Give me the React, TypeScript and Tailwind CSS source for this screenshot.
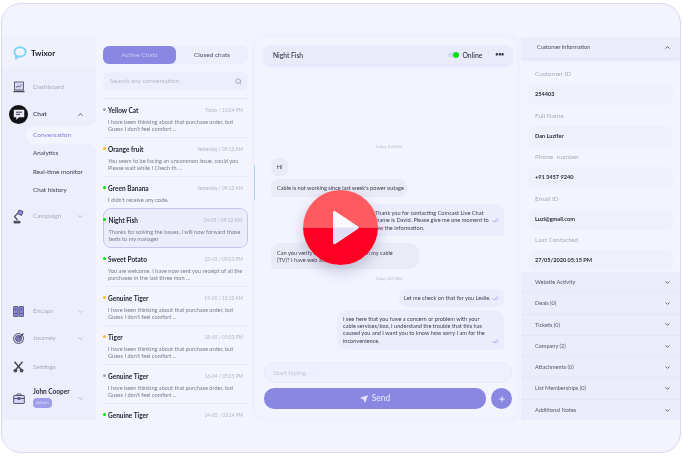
import React from 'react';
import { ChevronDown, ChevronUp, Search, Send, Plus, CheckCheck } from 'lucide-react';

const chats = [
  { name: 'Yellow Cat', time: 'Today / 10:24 PM', dot: 'bg-[#a9a9b8]', lines: ['I have been thinking about that purchase order, but', "Guess I don't feel comfort ..."] },
  { name: 'Orange fruit', time: 'Yesterday / 09:13 AM', dot: 'bg-[#fdb92e]', lines: ['You seem to be facing an uncommon issue, could you', 'Please wait while I Chech th ...'] },
  { name: 'Green Banana', time: 'Yesterday / 09:13 AM', dot: 'bg-[#0ade16]', lines: ["I didn't receive any code."] },
  { name: 'Night Fish', time: '24-05 / 09:13 AM', dot: 'bg-[#0ade16]', active: true, lines: ['Thanks for solving the issues. I will now forward those', 'texts to my manager'] },
  { name: 'Sweet Potato', time: '23-05 / 09:23 PM', dot: 'bg-[#0ade16]', lines: ['You are welcome. I have now sent you receipt of all the', 'purchases in the last three mon ...'] },
  { name: 'Genuine Tiger', time: '19-05 / 12:13 AM', dot: 'bg-[#fdb92e]', lines: ['I have been thinking about that purchase order, but', "Guess I don't feel comfort ..."] },
  { name: 'Tiger', time: '18-05 / 05:33 PM', dot: 'bg-[#fdb92e]', lines: ['I have been thinking about that purchase order, but', "Guess I don't feel comfort ..."] },
  { name: 'Genuine Tiger', time: '16-04 / 05:25 PM', dot: 'bg-[#a9a9b8]', lines: ['I have been thinking about that purchase order, but', "Guess I don't feel comfort ..."] },
  { name: 'Genuine Tiger', time: '14-05 / 03:14 PM', dot: 'bg-[#0ade16]', lines: [] },
];

const fields = [
  { label: 'Customer ID', value: '254403' },
  { label: 'Full Name', value: 'Dan Luzifer' },
  { label: 'Phone  number', value: '+91 3457 9240' },
  { label: 'Email ID', value: 'Luzi@gmail.com' },
  { label: 'Last Contacted', value: '27/05/2020 05:15 PM' },
];

const sections = ['Website Activity', 'Deals (0)', 'Tickets (0)', 'Company (2)', 'Attachments (0)', 'List Memberships (0)', 'Additional Notes'];

const LogoIcon = () => (
  <svg width="14" height="14" viewBox="0 0 14 14" fill="none">
    <path d="M7 1.2c3 0 5.6 1.9 5.6 4.7S10 10.5 7 10.5c-.6 0-1.2 0-1.7-.2L3 12.6l.1-3.2C2 8.500 1.400 7.300 1.400 5.900 1.400 3.100 4 1.200 7 1.200Z" fill="#eef3fd" stroke="#7fd3f7" strokeWidth="2" strokeLinejoin="round" />
  </svg>
);

const MonitorIcon = () => (
  <svg width="12" height="12" viewBox="0 0 12 12" fill="none" stroke="#4a4a60" strokeWidth="0.8">
    <rect x="1.500" y="1" width="9" height="8" fill="#d5d7f5" />
    <path d="M3 6.500 5 5l1.500 1L9 3.500" />
    <path d="M.5 10.500h11" strokeWidth="1.300" />
  </svg>
);

const ChatIcon = () => (
  <svg width="12" height="11" viewBox="0 0 12 11" fill="none">
    <path d="M1 1h10v7H6L3.500 10.300V8H1Z" fill="#e9e9f6" stroke="#e9e9f6" strokeWidth="0.500" />
    <path d="M3 3.200h6M3 5.400h4" stroke="#15151c" strokeWidth="0.800" />
  </svg>
);

const LampIcon = () => (
  <svg width="11" height="15" viewBox="0 0 11 15" fill="none" stroke="#4a4a60" strokeWidth="0.900">
    <path d="M6 1 10 2.500 8.500 6.500 4.500 4.500Z" fill="#8a87e2" />
    <path d="M4.500 4.500 1.500 7.500l3 3.500" strokeWidth="1.200" />
    <path d="M1 14h6v-1.800H1Z" fill="#4a4a60" />
  </svg>
);

const BinderIcon = () => (
  <svg width="11" height="11" viewBox="0 0 11 11" fill="#8a87e2" stroke="#4a4a60" strokeWidth="0.800">
    <rect x="0.500" y="0.500" width="4.500" height="10" rx="0.500" />
    <rect x="6" y="0.500" width="4.500" height="10" rx="0.500" />
    <path d="M2.700 2v3M8.200 2v3M1.500 7.500h2.500M7 7.500h2.500" fill="none" />
  </svg>
);

const TargetIcon = () => (
  <svg width="12" height="12" viewBox="0 0 12 12" fill="none" stroke="#4a4a60" strokeWidth="0.900">
    <circle cx="5.500" cy="6.500" r="5" fill="#d5d4f6" />
    <circle cx="5.500" cy="6.500" r="3" fill="#8a87e2" />
    <circle cx="5.500" cy="6.500" r="1.200" fill="#f3f4fe" />
    <path d="M5.500 6.500 10.500 1.500" strokeWidth="1.100" />
  </svg>
);

const ToolsIcon = () => (
  <svg width="11" height="12" viewBox="0 0 11 12" fill="none" stroke="#4a4a60">
    <path d="M1.500.8 8.500 9M9.500.8 2.500 9" strokeWidth="1.500" />
    <circle cx="2.400" cy="9.600" r="1.900" fill="#4a4a60" stroke="none" />
    <circle cx="8.600" cy="9.600" r="1.900" fill="#4a4a60" stroke="none" />
  </svg>
);

const CaseIcon = () => (
  <svg width="12" height="11" viewBox="0 0 12 11" fill="#d5d4f6" stroke="#4a4a60" strokeWidth="0.900">
    <rect x="0.700" y="2.500" width="10.600" height="8" rx="0.500" />
    <path d="M4 2.500V1h4v1.500M.7 5.500h10.600" fill="none" />
    <rect x="5" y="4.700" width="2" height="1.600" fill="#8a87e2" />
  </svg>
);

const NavItem = ({ icon, label, chevron, className }: { icon: React.ReactNode; label: string; chevron?: boolean; className: string }) => (
  <div className={`flex items-center h-[14px] ${className}`}>
    <div className="w-[31px] pl-[11px] flex justify-start">{icon}</div>
    <span className="text-[6.500px] text-[#a9abc0] w-[44px]">{label}</span>
    {chevron && <ChevronDown size={7} className="text-[#9a9bb0]" strokeWidth={2} />}
  </div>
);

const Sidebar = () => (
  <aside className="w-[94px] h-full bg-[#eceefc] flex flex-col shrink-0 relative">
    <div className="h-[31px] bg-[#eff1fd] flex items-center pl-[11px] gap-[4px]">
      <LogoIcon />
      <span className="text-[8px] font-bold text-[#23232f]">Twixor</span>
    </div>
    <NavItem className="mt-[12px]" icon={<MonitorIcon />} label="Dashboard" />
    <div className="flex items-center h-[20px] mt-[10px] relative">
      <div className="ml-[7px] w-[19px] h-[19px] rounded-full bg-[#111116] flex items-center justify-center"><ChatIcon /></div>
      <span className="ml-[5px] text-[6.500px] font-medium text-[#2d2d3b] w-[44px]">Chat</span>
      <ChevronUp size={7} className="text-[#30303f]" strokeWidth={2.500} />
    </div>
    <div className="relative ml-[24px] mt-[2px] h-[18px] bg-[#f3f4fe] rounded-l-[9px] flex items-center pl-[7px]">
      <span className="text-[6.500px] font-medium text-[#8a87e2]">Conversation</span>
      <div className="absolute right-0 -top-[8px] w-[8px] h-[8px] bg-[#f3f4fe]"><div className="w-full h-full bg-[#eceefc] rounded-br-[8px]" /></div>
      <div className="absolute right-0 -bottom-[8px] w-[8px] h-[8px] bg-[#f3f4fe]"><div className="w-full h-full bg-[#eceefc] rounded-tr-[8px]" /></div>
    </div>
    <div className="ml-[31px] mt-[5px] flex flex-col gap-[10.500px] text-[6.300px] text-[#3c3c4c] leading-[8px]">
      <span>Analytics</span>
      <span>Real-time monitor</span>
      <span>Chat history</span>
    </div>
    <NavItem className="mt-[15px]" icon={<LampIcon />} label="Campaign" chevron />
    <NavItem className="mt-[81px]" icon={<BinderIcon />} label="Encaps" chevron />
    <NavItem className="mt-[13px]" icon={<TargetIcon />} label="Journey" chevron />
    <NavItem className="mt-[15px]" icon={<ToolsIcon />} label="Settings" />
    <div className="flex mt-[12px] h-[24px] items-center">
      <div className="w-[31px] pl-[11px]"><CaseIcon /></div>
      <div className="w-[44px] flex flex-col items-start gap-[2px]">
        <span className="text-[6.500px] font-bold text-[#2d2d3b] leading-[8px] whitespace-nowrap">John Cooper</span>
        <span className="bg-[#a09deb] text-[#d9d8f8] text-[4.500px] rounded-[4px] px-[3px] h-[10px] flex items-center">Admin</span>
      </div>
      <ChevronDown size={7} className="text-[#9a9bb0]" strokeWidth={2} />
    </div>
  </aside>
);

const ChatList = () => (
  <section className="w-[159px] h-full shrink-0 pt-[9px] px-[7px] overflow-hidden relative">
    <div className="w-[145px] h-[18px] bg-[#eceefb] rounded-[6px] flex text-[6.500px]">
      <div className="w-[73px] h-full bg-[#8a87e2] rounded-[6px] flex items-center justify-center text-[#c9c8f3]">Active Chats</div>
      <div className="flex-1 flex items-center justify-center text-[#50505f]">Closed chats</div>
    </div>
    <div className="w-[145px] h-[18px] mt-[8px] bg-[#eceefb] rounded-[6px] flex items-center justify-between pl-[7px] pr-[6px] text-[6.500px] text-[#b5b7cc]">
      <span>Search any conversation</span>
      <Search size={7} className="text-[#80828f]" />
    </div>
    <div className="w-[145px] mt-[8px] border-t border-[#e5e6f6]">
      {chats.map((chat, i) => (
        <div
          key={i}
          className={
            chat.active
              ? 'relative h-[40px] -mt-[1px] pt-[7px] pl-[4.500px] pr-[5px] rounded-[8px] border border-[#c5c6f0] bg-[#ecedfb]'
              : `relative pt-[7px] pl-[5px] pr-[5px] ${chat.lines.length === 2 ? 'h-[39px] border-b border-[#e9eaf8]' : 'h-[32px]'}`
          }
        >
          <span className={`absolute left-0 top-[9px] w-[3px] h-[3px] rounded-full ${chat.dot} ${chat.active ? '-translate-x-[1px]' : ''}`} />
          <div className="flex items-center justify-between h-[9px]">
            <span className="text-[6.500px] font-bold text-[#262633]">{chat.name}</span>
            <span className="text-[4.800px] text-[#b3b5c4]">{chat.time}</span>
          </div>
          <div className="mt-[2.500px] text-[5.600px] leading-[7px] text-[#7c7c8c] whitespace-nowrap">
            {chat.lines.map((l) => <div key={l}>{l}</div>)}
          </div>
        </div>
      ))}
    </div>
    <div className="absolute right-[-1px] top-[128px] w-[2px] h-[35px] bg-[#9fdcf8]" />
  </section>
);

const Ticks = () => <CheckCheck size={7} className="text-[#a9a6ee] shrink-0" strokeWidth={3} />;

const Message = ({ lines, me, className }: { lines: string[]; me?: boolean; className: string }) => (
  <div className={`flex text-[5.600px] leading-[7.200px] text-[#3e3e4e] whitespace-nowrap ${className}`}>
    <div className="flex-1">{lines.map((l) => <div key={l}>{l}</div>)}</div>
    {me && <div className="self-end ml-[3px]"><Ticks /></div>}
  </div>
);

const ChatPanel = () => (
  <section className="w-[262px] h-[381px] shrink-0 bg-[#f3f4fe] rounded-[10px] shadow-[0_0_6px_rgba(200,202,240,0.25)] relative pt-[9px] px-[9px] flex flex-col">
    <div className="w-[248px] h-[18px] bg-[#e9ebfb] rounded-[6px] shadow-[0_2px_4px_rgba(200,202,240,0.4)] flex items-center pl-[9px] pr-[7px] shrink-0">
      <span className="text-[6.700px] font-medium text-[#30303f] flex-1">Night Fish</span>
      <span className="relative w-[11px] h-[4px] rounded-full bg-[#d5d7f3] mr-[3px]">
        <span className="absolute right-0 top-[-1px] w-[6px] h-[6px] rounded-full bg-[#0ade16]" />
      </span>
      <span className="text-[6.800px] font-medium text-[#30303f]">Online</span>
      <span className="w-px h-[8px] bg-[#e1e3f7] mx-[6px]" />
      <span className="text-[5.500px] font-bold text-[#30303f] leading-none tracking-[-0.300px] pr-[1px]">•••</span>
    </div>
    <div className="text-center text-[4.200px] text-[#bcbdcc] mt-[80px] h-[5px] leading-[5px] pl-[6px]">Today 8:24AM</div>
    <div className="mt-[9px] pl-[7px] flex flex-col items-start">
      <div className="h-[18px] w-[17px] rounded-[7px] bg-[#eaebf6] flex items-center justify-center text-[5.600px] text-[#3e3e4e]">Hi</div>
      <Message className="mt-[3px] h-[18px] w-[136px] rounded-[8px] rounded-bl-[2px] bg-[#eaebf6] px-[6px] items-center" lines={["Cable is not working since last week's power outage"]} />
    </div>
    <div className="self-end mr-[4px] mt-[7px] h-[32px] w-[150px] rounded-[8px] rounded-br-[2px] bg-[#ecedfc] pl-[13px] pr-[5.500px] flex items-center text-[5.600px] leading-[7.200px] text-[#3e3e4e] whitespace-nowrap">
      <div className="flex-1">
        <div>Hi, Thank you for contacting Comcast Live Chat</div>
        <div>My name is David. Please give me one moment to</div>
        <div>review the information.</div>
      </div>
      <Ticks />
    </div>
    <Message className="ml-[7px] mt-[7px] h-[26px] w-[148px] rounded-[9px] rounded-bl-[2px] bg-[#eaebf6] px-[6px] items-center" lines={['Can you verify there is a problem with my cable', '(TV)? I have web access only.']} />
    <div className="text-center text-[4.200px] text-[#bcbdcc] mt-[7px] h-[5px] leading-[5px] pl-[6px]">Today 8:27AM</div>
    <div className="self-end mr-[4px] mt-[8px] h-[18px] w-[105px] rounded-[7px] bg-[#ecedfc] pl-[5px] pr-[5.500px] flex items-center text-[5.600px] text-[#3e3e4e] whitespace-nowrap justify-between">
      <span>Let me check on that for you Leslie.</span>
      <Ticks />
    </div>
    <Message me className="self-end mr-[4px] mt-[3px] h-[40px] w-[167px] rounded-[9px] rounded-br-[2px] bg-[#ecedfc] pl-[6px] pr-[5.500px] pt-[5px] pb-[5px]" lines={['I see here that you have a concern or problem with your', 'cable services/box, I understand the trouble that this has', 'caused you and I want you to know how sorry I am for the', 'inconvenience.']} />
    <div className="w-[248px] h-[21px] mt-[12px] bg-[#eff0fd] border border-[#e8e9fa] rounded-[10px] flex items-center pl-[8px] text-[6.500px] text-[#c3c4da] shrink-0">Start typing . . .</div>
    <div className="flex items-center justify-between mt-[5px] w-[248px] shrink-0">
      <div className="w-[222px] h-[21px] bg-[#8a87e2] rounded-[10px] flex items-center justify-center gap-[4px] text-[#e3e2fa] text-[8.500px] font-medium">
        <Send size={8} fill="#e3e2fa" />
        <span>Send</span>
      </div>
      <div className="w-[21px] h-[21px] rounded-full bg-[#8a87e2] flex items-center justify-center">
        <Plus size={8} className="text-[#eeedfc]" strokeWidth={3} />
      </div>
    </div>
  </section>
);

const InfoPanel = () => (
  <section className="w-[159px] h-full ml-[4px] shrink-0 flex flex-col overflow-hidden">
    <div className="h-[21px] shrink-0 bg-[#ecedfb] shadow-[0_2px_4px_rgba(200,202,240,0.45)] flex items-center justify-between pl-[16px] pr-[9px] text-[5.500px] text-[#4a4a5a] z-10">
      <span>Customer Information</span>
      <ChevronUp size={7} className="text-[#30303f]" strokeWidth={2.500} />
    </div>
    <div className="px-[7px] pt-[12px] flex flex-col gap-[6.500px]">
      {fields.map((f) => (
        <div key={f.label}>
          <div className="text-[6.500px] leading-[8px] text-[#a9abbc] pl-[7px] whitespace-pre mb-[6px]">{f.label}</div>
          <div className="w-[145px] h-[21px] rounded-[7px] bg-[#eef0fb] flex items-center pl-[7px] text-[5.600px] font-bold text-[#2d2d3b]">{f.value}</div>
        </div>
      ))}
    </div>
    <div className="flex flex-col shrink-0 bg-[#ecedfc] mt-[1px]">
      {sections.map((s) => (
        <div key={s} className="h-[21.300px] flex items-center justify-between pl-[14px] pr-[9px] border-b border-[#e3e5f8] last:border-b-0 text-[5.600px] text-[#55556a]">
          <span>{s}</span>
          <ChevronDown size={7} className="text-[#40404f]" strokeWidth={2.500} />
        </div>
      ))}
    </div>
  </section>
);

const PlayButton = () => (
  <div className="absolute left-[303px] top-[190px] w-[75px] h-[75px] rounded-full overflow-hidden shadow-[0_6px_14px_rgba(120,120,160,0.4)]">
    <div className="h-1/2 bg-[#ff5a60]" />
    <div className="h-1/2 bg-[#ff0024]" />
    <svg className="absolute inset-0" width="75" height="75" viewBox="0 0 75 75">
      <path d="M30 22.500a1.500 1.500 0 0 1 2.300-1.200l22.500 15a1.500 1.500 0 0 1 0 2.400l-22.500 15a1.500 1.500 0 0 1-2.300-1.200V37.500Z" fill="#fafafe" />
      <path d="M30 37.500h26v.2l-1.200 1-22.500 15a1.500 1.500 0 0 1-2.300-1.200Z" fill="#e3def6" />
    </svg>
  </div>
);

export default function App() {
  return (
    <div className="relative w-[682px] h-[456px] bg-white overflow-hidden blur-[0.35px]" style={{ fontFamily: 'Lato, "Noto Sans", sans-serif' }}>
      <div className="absolute left-[1px] top-[3px] w-[680px] h-[450px] rounded-[20px] border border-[#d8d8f4] bg-[#f3f4fe] pt-[33px] overflow-hidden">
        <div className="flex h-[383px]">
          <Sidebar />
          <ChatList />
          <ChatPanel />
          <InfoPanel />
        </div>
      </div>
      <PlayButton />
    </div>
  );
}
